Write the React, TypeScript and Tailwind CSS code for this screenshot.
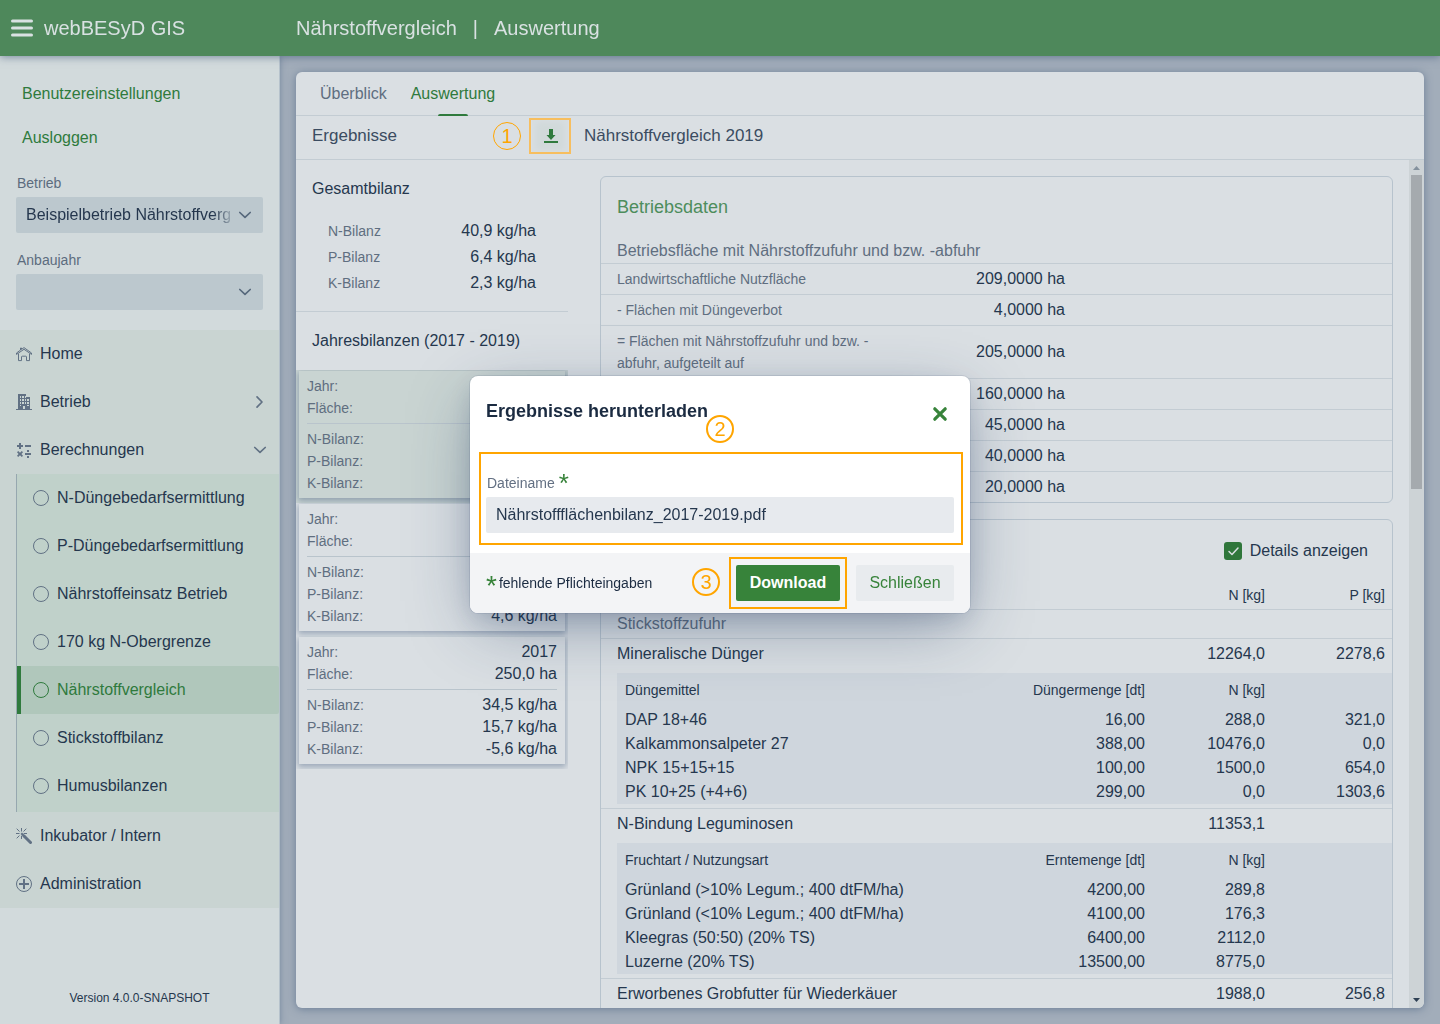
import { useState } from "react";
import type { ReactNode } from "react";
import clsx from "clsx";

function ChevronDown({ className }: { className?: string }) {
  return (
    <svg viewBox="0 0 14 10" className={clsx("h-[10px] w-[14px]", className)} fill="none" stroke="currentColor" strokeWidth="1.7" strokeLinecap="round" strokeLinejoin="round">
      <path d="M1.800 2.500 7 7.300l5.200-4.800" />
    </svg>
  );
}

function ChevronRight() {
  return (
    <svg viewBox="0 0 10 14" className="mr-[3px] h-[14px] w-[10px]" fill="none" stroke="currentColor" strokeWidth="1.7" strokeLinecap="round" strokeLinejoin="round">
      <path d="M3 1.800 8 7l-5 5.200" />
    </svg>
  );
}

function HomeIcon() {
  return (
    <svg viewBox="0 0 16 16" className="size-4" fill="none" stroke="currentColor" strokeWidth="1">
      <path d="M.5 8.400V7L4.500 4.100V2h1v1.400L8 1.600 15.500 7v1.400L8 3.300Z" />
      <path d="M2.500 7.600v7h3v-3.600a.8.8 0 0 1 .8-.8h3.400a.8.8 0 0 1 .8.800v3.600h3v-7" />
    </svg>
  );
}

function BuildingIcon() {
  return (
    <svg viewBox="0 0 16 16" className="size-4" fill="currentColor" fillRule="evenodd">
      <path d="M2 0h8v3h4v12h2v1H0v-1h2ZM4 2v2h1V2Zm2 0v2h2V2Zm3 0v2h1V2ZM4 5v2h1V5Zm2 0v2h2V5Zm3 0v2h1V5Zm2 0v2h2V5ZM4 8v2h1V8Zm2 0v2h2V8Zm3 0v2h1V8Zm2 0v2h2V8ZM4 11v1h1v-1Zm7 0v1h2v-1Zm-4 1v3h2v-3Z" />
    </svg>
  );
}

function CalcIcon() {
  return (
    <svg viewBox="0 0 16 16" className="size-4" fill="currentColor">
      <path d="M3 1h2v2h2v2H5v2H3V5H1V3h2ZM9 3h6v2H9ZM9 11h6v2H9ZM11 8h2v2h-2ZM11 14h2v2h-2Z" />
      <path d="M2.200 9 4 10.700 5.800 9 7 10.200 5.400 12 7 13.800 5.800 15 4 13.300 2.200 15 1 13.800 2.600 12 1 10.200Z" />
    </svg>
  );
}

function WandIcon() {
  return (
    <svg viewBox="0 0 16 16" className="size-4" fill="none" stroke="currentColor">
      <path d="M5.500 0v3.500M0 5.500h3.500M7.700 5.500H11M5.500 7.700V11M.7.7l2.800 2.800M10.300.7 7.500 3.500M.7 10.300l2.800-2.800" strokeWidth="1" />
      <path d="M5.300 5.300 9 9" strokeWidth="2" />
      <path d="m8 8 6.500 6.500" strokeWidth="3" strokeLinecap="round" />
    </svg>
  );
}

function PlusCircleIcon() {
  return (
    <svg viewBox="0 0 16 16" className="size-4" fill="none" stroke="currentColor">
      <circle cx="8" cy="8" r="7.5" />
      <path d="M8 3v10M3 8h10" strokeWidth="2" />
    </svg>
  );
}

function CircleIcon() {
  return (
    <svg viewBox="0 0 16 16" className="size-4" fill="none" stroke="currentColor">
      <circle cx="8" cy="8" r="7.5" />
    </svg>
  );
}

function NavItem({ icon, label, end }: { icon: ReactNode; label: string; end?: ReactNode }) {
  return (
    <a href="#" className="flex h-12 items-center gap-2 pr-3 pl-4">
      <span className="text-[#617184]">{icon}</span>
      <span className="flex-1">{label}</span>
      <span className="text-[#617184]">{end}</span>
    </a>
  );
}

function SelectField({ id, label, options }: { id: string; label: string; options: string[] }) {
  return (
    <div>
      <label htmlFor={id} className="block h-[25px] pl-px text-sm leading-[22px] text-[#5c6c7e]">
        {label}
      </label>
      <div className="relative h-9 rounded-xs bg-[#bcc8ce]">
        <select
          id={id}
          className="h-9 w-full appearance-none pr-[33px] pl-[10px] text-[#25374e] outline-none [mask-image:linear-gradient(to_right,black_calc(100%_-_50px),transparent_calc(100%_-_27px))]"
        >
          {options.map((option) => (
            <option key={option}>{option}</option>
          ))}
        </select>
        <ChevronDown className="pointer-events-none absolute top-[13px] right-[11px] text-[#56687b]" />
      </div>
    </div>
  );
}

const calculations = [
  "N-Düngebedarfsermittlung",
  "P-Düngebedarfsermittlung",
  "Nährstoffeinsatz Betrieb",
  "170 kg N-Obergrenze",
  "Nährstoffvergleich",
  "Stickstoffbilanz",
  "Humusbilanzen",
];

function Sidebar() {
  return (
    <aside className="flex w-[280px] shrink-0 flex-col border-r border-[#b6c2cc] bg-[#d2dadc] shadow-[0_0_6px_rgba(70,95,130,0.5)]">
      <div className="flex flex-col items-start gap-2 px-[22px] pt-5 text-[#2f7a3d]">
        <button className="h-9">Benutzereinstellungen</button>
        <button className="h-9">Ausloggen</button>
      </div>
      <div className="flex flex-col gap-4 px-4 pt-4 pb-5">
        <SelectField id="betrieb" label="Betrieb" options={["Beispielbetrieb Nährstoffvergleich"]} />
        <SelectField id="anbaujahr" label="Anbaujahr" options={[""]} />
      </div>
      <nav className="bg-[#c9d4d2] text-[#25374e]">
        <NavItem icon={<HomeIcon />} label="Home" />
        <NavItem icon={<BuildingIcon />} label="Betrieb" end={<ChevronRight />} />
        <NavItem icon={<CalcIcon />} label="Berechnungen" end={<ChevronDown />} />
        <div className="ml-4 border-l border-[#96a7af] bg-[#c0d1ca] pb-[2px]">
          {calculations.map((item) => {
            const active = item === "Nährstoffvergleich";
            return (
              <a
                key={item}
                href="#"
                className={clsx(
                  "flex h-12 items-center gap-2 border-l-4 pl-3",
                  active ? "rounded-r-xs border-[#2f7a3d] bg-[#b0c7bb] text-[#2f7a3d]" : "border-transparent",
                )}
              >
                <span className={clsx(!active && "text-[#617184]")}>
                  <CircleIcon />
                </span>
                {item}
              </a>
            );
          })}
        </div>
        <NavItem icon={<WandIcon />} label="Inkubator / Intern" />
        <NavItem icon={<PlusCircleIcon />} label="Administration" />
      </nav>
      <p className="mt-auto pb-4 text-center text-xs leading-5 text-[#25374e]">Version 4.0.0-SNAPSHOT</p>
    </aside>
  );
}

function Step({ n, className }: { n: number; className: string }) {
  return (
    <span className={clsx("absolute flex size-7 items-center justify-center rounded-full border-[#ffa500] text-xl text-[#ffa500]", className)}>
      {n}
    </span>
  );
}

const totals = [
  ["N-Bilanz", "40,9 kg/ha"],
  ["P-Bilanz", "6,4 kg/ha"],
  ["K-Bilanz", "2,3 kg/ha"],
];

// values: Jahr, Fläche, N, P, K
const years = [
  { selected: true, values: ["", "", "", "", ""] },
  { selected: false, values: ["", "", "", "", "4,6 kg/ha"] },
  { selected: false, values: ["2017", "250,0 ha", "34,5 kg/ha", "15,7 kg/ha", "-5,6 kg/ha"] },
];

const yearLabels = ["Jahr:", "Fläche:", "N-Bilanz:", "P-Bilanz:", "K-Bilanz:"];

function YearCard({ selected, values }: { selected: boolean; values: string[] }) {
  return (
    <div className={clsx("overflow-hidden px-[3px] pt-px pb-[5px]", selected ? "bg-[#c9d4d2]" : "bg-[#dadfe3]")}>
      <dl
        className={clsx(
          "px-2 py-1 shadow-[0_2px_6px_1px_rgba(60,85,120,0.4)]",
          selected ? "bg-[#c9d4d2]" : "bg-[#dadfe3]",
        )}
      >
        {yearLabels.map((label, i) => (
          <div key={label} className={clsx("flex justify-between leading-[22px]", i === 2 && "mt-1 border-t border-[#b9c4cc] pt-1")}>
            <dt className="text-sm leading-[22px] text-[#5f6e80]">{label}</dt>
            <dd>{values[i]}</dd>
          </div>
        ))}
      </dl>
    </div>
  );
}

function Balances() {
  return (
    <section className="w-[272px] shrink-0">
      <div className="h-[152px] border-b border-[#c3ccd3] pt-4">
        <h2 className="h-[42px] px-4 leading-[26px]">Gesamtbilanz</h2>
        <dl className="px-8">
          {totals.map(([label, value]) => (
            <div key={label} className="flex h-[26px] items-center justify-between">
              <dt className="text-sm text-[#5f6e80]">{label}</dt>
              <dd>{value}</dd>
            </div>
          ))}
        </dl>
      </div>
      <h2 className="h-[58px] px-4 leading-[57px]">Jahresbilanzen (2017 - 2019)</h2>
      {years.map((year, i) => (
        <YearCard key={i} {...year} />
      ))}
    </section>
  );
}

const areas = [
  ["Landwirtschaftliche Nutzfläche", "209,0000 ha"],
  ["- Flächen mit Düngeverbot", "4,0000 ha"],
  ["= Flächen mit Nährstoffzufuhr und bzw. -abfuhr, aufgeteilt auf", "205,0000 ha"],
  ["", "160,0000 ha"],
  ["", "45,0000 ha"],
  ["", "40,0000 ha"],
  ["", "20,0000 ha"],
];

function FarmData() {
  return (
    <section className="rounded-md border border-[#b7c3cd]">
      <h2 className="px-4 text-lg leading-[60px] text-[#4d8d5c]">Betriebsdaten</h2>
      <h3 className="h-[27px] border-b border-[#c3ccd3] px-4 leading-7 text-[#5f6e80]">
        Betriebsfläche mit Nährstoffzufuhr und bzw. -abfuhr
      </h3>
      <table className="w-full table-fixed border-separate border-spacing-0">
        <tbody>
          {areas.map(([label, value], i) => (
            <tr key={value} className={clsx(i < areas.length - 1 && "[&>*]:border-b [&>*]:border-[#c3ccd3]")}>
              <th className="w-[288px] py-1 pl-4 text-left text-sm leading-[22px] font-normal text-[#5f6e80]">{label}</th>
              <td className="w-[176px] py-1 text-right leading-[22px]">{value}</td>
              <td />
            </tr>
          ))}
        </tbody>
      </table>
    </section>
  );
}

type Group = {
  name: string;
  n: string;
  p: string;
  detailHead?: string[];
  details?: string[][];
};

const groups: Group[] = [
  {
    name: "Mineralische Dünger",
    n: "12264,0",
    p: "2278,6",
    detailHead: ["Düngemittel", "Düngermenge [dt]", "N [kg]", ""],
    details: [
      ["DAP 18+46", "16,00", "288,0", "321,0"],
      ["Kalkammonsalpeter 27", "388,00", "10476,0", "0,0"],
      ["NPK 15+15+15", "100,00", "1500,0", "654,0"],
      ["PK 10+25 (+4+6)", "299,00", "0,0", "1303,6"],
    ],
  },
  {
    name: "N-Bindung Leguminosen",
    n: "11353,1",
    p: "",
    detailHead: ["Fruchtart / Nutzungsart", "Erntemenge [dt]", "N [kg]", ""],
    details: [
      ["Grünland (>10% Legum.; 400 dtFM/ha)", "4200,00", "289,8", ""],
      ["Grünland (<10% Legum.; 400 dtFM/ha)", "4100,00", "176,3", ""],
      ["Kleegras (50:50) (20% TS)", "6400,00", "2112,0", ""],
      ["Luzerne (20% TS)", "13500,00", "8775,0", ""],
    ],
  },
  { name: "Erworbenes Grobfutter für Wiederkäuer", n: "1988,0", p: "256,8" },
];

function GroupRows({ group, last }: { group: Group; last: boolean }) {
  return (
    <tbody>
      <tr className="h-[30px]">
        <td className="pl-4">{group.name}</td>
        <td className="pr-[7px] text-right">{group.n}</td>
        <td className="pr-[7px] text-right">{group.p}</td>
      </tr>
      {group.details && group.detailHead && (
        <tr>
          <td colSpan={3} className={clsx("py-1 pl-4", !last && "border-b border-[#c3ccd3]")}>
            <table className="w-full table-fixed bg-[#cfd6dd]">
              <thead>
                <tr className="h-[35px] text-sm">
                  {group.detailHead.map((head, i) => (
                    <th key={i} className={clsx("pr-[7px] pb-[2px] font-normal", i === 0 ? "pl-2 text-left" : "text-right", i === 1 && "w-[160px]", i > 1 && "w-[120px]")}>
                      {head}
                    </th>
                  ))}
                </tr>
              </thead>
              <tbody>
                {group.details.map((row) => (
                  <tr key={row[0]} className="h-6">
                    {row.map((cell, i) => (
                      <td key={i} className={clsx("pr-[7px]", i === 0 ? "pl-2" : "text-right")}>
                        {cell}
                      </td>
                    ))}
                  </tr>
                ))}
              </tbody>
            </table>
          </td>
        </tr>
      )}
    </tbody>
  );
}

function Supply() {
  const [details, setDetails] = useState(true);

  return (
    <section className="mt-4 rounded-md border border-[#b7c3cd] pb-4">
      <div className="flex h-[62px] items-center justify-end pr-6">
        <label className="flex items-center gap-2">
          <span className="relative flex">
            <input
              type="checkbox"
              checked={details}
              onChange={(e) => setDetails(e.target.checked)}
              className="size-[18px] appearance-none rounded-[3px] bg-[#b7c3cd] checked:bg-[#2f763b]"
            />
            {details && (
              <svg viewBox="0 0 18 18" className="pointer-events-none absolute inset-0 size-[18px]" fill="none" stroke="#dadfe3" strokeWidth="1.500" strokeLinecap="round" strokeLinejoin="round">
                <path d="m5 9.500 3 3 6-6.500" />
              </svg>
            )}
          </span>
          Details anzeigen
        </label>
      </div>
      <table className="w-full table-fixed border-separate border-spacing-0">
        <thead>
          <tr className="h-7 text-sm [&>th]:border-b [&>th]:border-[#c3ccd3] [&>th]:pb-[2px] [&>th]:font-normal">
            <th />
            <th className="w-[120px] pr-[7px] text-right">N [kg]</th>
            <th className="w-[120px] pr-[7px] text-right">P [kg]</th>
          </tr>
          <tr className="h-[29px]">
            <th colSpan={3} className="border-b border-[#c3ccd3] pl-4 text-left font-normal text-[#5f6e80]">
              Stickstoffzufuhr
            </th>
          </tr>
        </thead>
        {groups.map((group, i) => (
          <GroupRows key={group.name} group={details ? group : { ...group, details: undefined }} last={i === groups.length - 1} />
        ))}
      </table>
    </section>
  );
}

function ScrollBar() {
  return (
    <div className="flex w-[15px] shrink-0 flex-col items-center bg-[#cdd3d6]">
      <svg viewBox="0 0 15 15" className="size-[15px] shrink-0" fill="#84919d">
        <path d="M7.500 6 11 10H4Z" />
      </svg>
      <div className="h-[37%] w-[11px] bg-[#a5aaae]" />
      <svg viewBox="0 0 15 15" className="mt-auto size-[15px] shrink-0" fill="#2f4054">
        <path d="M4 5h7L7.500 9Z" />
      </svg>
    </div>
  );
}

function DownloadDialog({ onClose }: { onClose: () => void }) {
  const [fileName, setFileName] = useState("Nährstoffflächenbilanz_2017-2019.pdf");

  return (
    <div className="fixed inset-0 flex items-start justify-center pt-94">
      <div
        role="dialog"
        aria-labelledby="dialog-title"
        className="relative w-[500px] rounded-lg bg-white text-[#1b2b41] shadow-[0_0_0_1px_rgba(28,52,90,0.1),0_8px_24px_-4px_rgba(28,52,90,0.2),0_18px_64px_-8px_rgba(28,52,90,0.4)]"
      >
        <header className="flex h-19 items-center justify-between px-4">
          <h2 id="dialog-title" className="pb-[6px] text-lg font-bold">
            Ergebnisse herunterladen
          </h2>
          <button aria-label="Fenster schließen" onClick={onClose} className="p-[6px] text-[#37833a]">
            <svg viewBox="0 0 16 16" className="size-4" fill="none" stroke="currentColor" strokeWidth="3.200" strokeLinecap="round">
              <path d="m2.800 2.800 10.400 10.400M13.200 2.800 2.800 13.200" />
            </svg>
          </button>
        </header>
        <div className="relative px-4 py-5">
          <label htmlFor="dateiname" className="flex h-[25px] pl-px text-sm leading-[22px] text-[#637083]">
            Dateiname
            <span className="pl-1 text-[26px] leading-[22px] text-[#37833a]">*</span>
          </label>
          <input
            id="dateiname"
            value={fileName}
            onChange={(e) => setFileName(e.target.value)}
            className="block h-9 w-full rounded-xs bg-[#e7eaee] px-[10px] text-[#25374e] outline-none"
          />
          <div className="pointer-events-none absolute top-0 right-[7px] bottom-2 left-[9px] border-2 border-[#ffa500]" />
        </div>
        <footer className="flex h-15 items-center gap-4 rounded-b-lg bg-[#f3f4f6] px-4">
          <p className="flex flex-1 items-center text-sm">
            <span className="h-5 pr-[2px] text-[28px] leading-[26px] text-[#37833a]">*</span>
            fehlende Pflichteingaben
          </p>
          <div className="relative">
            <button className="block h-9 w-26 rounded-xs bg-[#37833a] font-bold text-white">Download</button>
            <div className="pointer-events-none absolute -inset-x-[7px] -inset-y-2 border-2 border-[#ffa500]" />
            <Step n={3} className="top-[3px] -left-11 border-2" />
          </div>
          <button onClick={onClose} className="h-9 w-[98px] rounded-xs bg-[#e8ebee] text-[#37833a]">
            Schließen
          </button>
        </footer>
        <Step n={2} className="top-[39px] left-59 border-2" />
      </div>
    </div>
  );
}

export default function App() {
  const [open, setOpen] = useState(true);

  return (
    <div className="flex h-screen flex-col overflow-hidden bg-[#a2adba] font-['Liberation_Sans',sans-serif] text-base text-[#25374e]">
      <header className="relative z-10 flex h-14 shrink-0 items-center bg-[#4e885b] text-xl text-[#d9e1e2] shadow-[0_1px_8px_rgba(60,85,120,0.6)]">
        <div className="flex w-[296px] items-center gap-[11px] pl-[11px]">
          <button aria-label="Menü">
            <svg viewBox="0 0 22 18" className="h-[18px] w-[22px]" stroke="currentColor" strokeWidth="3" strokeLinecap="round">
              <path d="M1.500 2h19M1.500 9h19M1.500 16h19" />
            </svg>
          </button>
          <h1>webBESyD GIS</h1>
        </div>
        <div className="flex gap-4">
          <span>Nährstoffvergleich</span>
          <span>|</span>
          <span>Auswertung</span>
        </div>
      </header>
      <div className="flex min-h-0 flex-1">
        <Sidebar />
        <main className="min-w-0 flex-1 p-4">
          <div className="flex h-full flex-col overflow-hidden rounded-md bg-[#dadfe3] shadow-[0_1px_8px_rgba(60,85,120,0.55)]">
            <nav className="flex h-11 shrink-0 gap-6 border-b border-[#c3ccd3] px-6 leading-[43px]">
              <a href="#" className="text-[#5f6e80]">
                Überblick
              </a>
              <a href="#" className="relative text-[#2f7a3d]">
                Auswertung
                <span className="absolute -bottom-px left-1/2 h-[2px] w-[30px] -translate-x-1/2 rounded-t-xs bg-[#2f7a3d]" />
              </a>
            </nav>
            <div className="flex h-11 shrink-0 border-b border-[#c3ccd3] text-[17px] leading-[39px] text-[#3b4c61]">
              <div className="flex w-[272px] justify-between pl-4">
                <h2>Ergebnisse</h2>
                <div className="relative mt-[2px] h-9">
                  <button aria-label="Herunterladen" onClick={() => setOpen(true)} className="flex size-9 items-center justify-center rounded-xs bg-[#d1d9da] pl-[2px] text-[#2f7a3d] shadow-[inset_0_0_6px_4px_#d8dee1]">
                    <svg viewBox="0 0 14 14" className="size-[14px]" fill="currentColor">
                      <path d="M5 0h4v6h2.500L7 11 2.500 6H5ZM0 12h14v2H0Z" />
                    </svg>
                  </button>
                  <div className="pointer-events-none absolute -inset-x-[3px] inset-y-0 border-2 border-[#f7be5f]" />
                  <Step n={1} className="top-1 -left-[39px] border" />
                </div>
              </div>
              <h2 className="pl-4">Nährstoffvergleich 2019</h2>
            </div>
            <div className="flex min-h-0 flex-1">
              <Balances />
              <div className="min-w-0 flex-1 overflow-hidden py-4 pr-4 pl-8">
                <FarmData />
                <Supply />
              </div>
              <ScrollBar />
            </div>
          </div>
        </main>
      </div>
      {open && <DownloadDialog onClose={() => setOpen(false)} />}
    </div>
  );
}
